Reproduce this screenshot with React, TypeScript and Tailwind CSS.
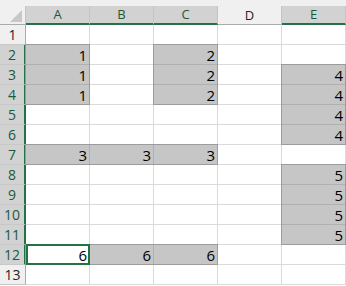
import React from "react";

const columns = ["A", "B", "C", "D", "E"];
const selectedCols = ["A", "B", "C", "E"];
const rows = Array.from({ length: 13 }, (_, i) => i + 1);

const values: Record<string, number> = {
  A2: 1, A3: 1, A4: 1,
  C2: 2, C3: 2, C4: 2,
  E3: 4, E4: 4, E5: 4, E6: 4,
  A7: 3, B7: 3, C7: 3,
  E8: 5, E9: 5, E10: 5, E11: 5,
  A12: 6, B12: 6, C12: 6,
};

// grid column 1 is the row header, sheet row r sits on grid row r + 1
const ranges = [
  "col-start-2 row-start-3 row-span-3",
  "col-start-4 row-start-3 row-span-3",
  "col-start-6 row-start-4 row-span-4",
  "col-start-2 col-span-3 row-start-8",
  "col-start-6 row-start-9 row-span-4",
  "col-start-2 col-span-3 row-start-13",
];

function ColumnHeader({ name }: { name: string }) {
  const selected = selectedCols.includes(name);
  return (
    <div
      className={`flex items-center justify-center border-r border-r-[#c4c4c4] text-[13px] leading-none ${
        selected
          ? "bg-[#d2d2d2] border-b-2 border-b-[#217346] text-[#1b5a36]"
          : "bg-[#f0f0f0] border-b border-b-[#ababab] text-[#262626]"
      }`}
    >
      {name}
    </div>
  );
}

function RowHeader({ row }: { row: number }) {
  const selected = row >= 2 && row <= 12;
  return (
    <div
      className={`flex items-center justify-center border-b border-b-[#c8c8c8] text-[14px] leading-none ${
        selected
          ? "bg-[#d2d2d2] border-r-2 border-r-[#217346] text-[#1b5a36]"
          : "bg-[#f0f0f0] border-r border-r-[#ababab] text-[#262626]"
      }`}
    >
      {row}
    </div>
  );
}

function Cell({ id }: { id: string }) {
  const value = values[id];
  const selected = value !== undefined;
  return (
    <div
      className={`flex items-center justify-end pr-[2px] pt-[2px] border-r border-b text-[15px] leading-none text-black ${
        selected ? "bg-[#c6c6c6] border-[#b0b0b0]" : "bg-white border-[#dadada]"
      } ${id === "A12" ? "bg-white" : ""}`}
    >
      {value}
    </div>
  );
}

export default function App() {
  return (
    <div className="relative w-[346px] h-[286px] overflow-hidden bg-white font-['Open_Sans',sans-serif]">
      <div className="h-[6px] bg-[#f0f0f0]" />
      <div className="grid grid-cols-[26px_repeat(5,64px)] grid-rows-[19px_repeat(13,20px)]">
        <div className="flex items-end justify-end pr-[3px] pb-[2px] bg-[#f0f0f0] border-r border-r-[#c4c4c4] border-b border-b-[#ababab]">
          <svg width="12" height="12" viewBox="0 0 12 12">
            <polygon points="12,0 12,12 0,12" fill="#c8c8c8" />
          </svg>
        </div>
        {columns.map((c) => (
          <ColumnHeader key={c} name={c} />
        ))}
        {rows.map((r) => (
          <React.Fragment key={r}>
            <RowHeader row={r} />
            {columns.map((c) => (
              <Cell key={c + r} id={c + r} />
            ))}
          </React.Fragment>
        ))}
      </div>

      {/* selection outlines drawn over the sheet */}
      <div className="pointer-events-none absolute left-0 top-[6px] grid grid-cols-[26px_repeat(5,64px)] grid-rows-[19px_repeat(13,20px)]">
        {ranges.map((cls) => (
          <div key={cls} className={`${cls} -ml-px -mt-px border border-[#9c9c9c]`} />
        ))}
        <div className="col-start-2 row-start-13 -mt-px border-2 border-[#217346]" />
      </div>
    </div>
  );
}
